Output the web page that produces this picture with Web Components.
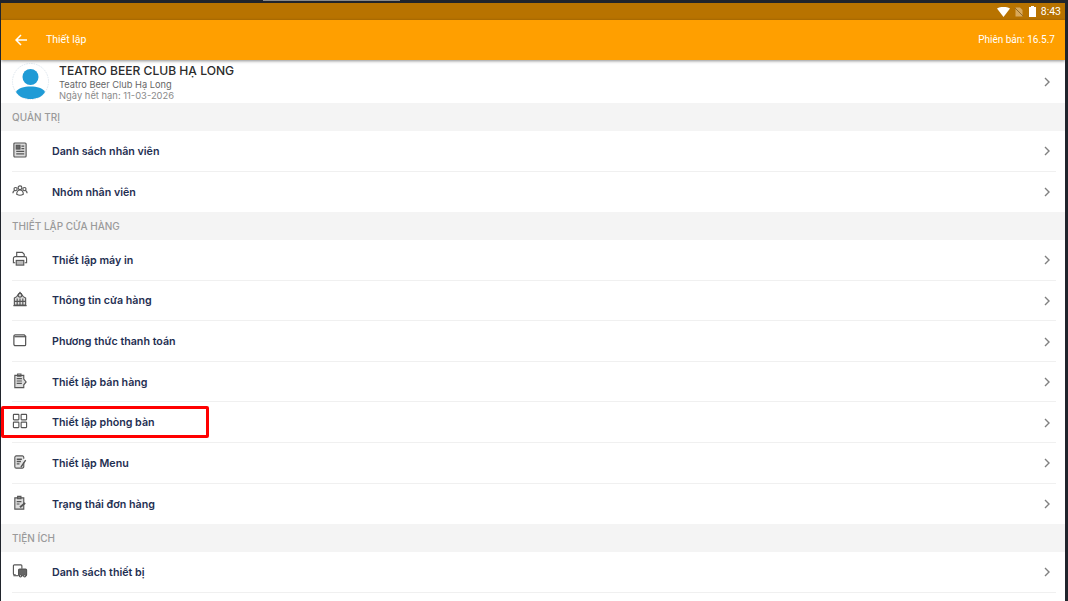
<!DOCTYPE html>
<html lang="vi">
<head>
<meta charset="utf-8">
<title>Thiết lập</title>
<style>
	html, body { margin: 0; height: 100%; background: #20242c; overflow: hidden; }
</style>
</head>
<body>
<app-frame>
	<status-bar time="8:43"></status-bar>
	<app-header title="Thiết lập" version="Phiên bản: 16.5.7"></app-header>
	<settings-list>
		<profile-row name="TEATRO BEER CLUB HẠ LONG" sub="Teatro Beer Club Hạ Long" expiry="Ngày hết hạn: 11-03-2026"></profile-row>
		<section-label>QUẢN TRỊ</section-label>
		<menu-row icon="staff">Danh sách nhân viên</menu-row>
		<menu-row icon="group" last>Nhóm nhân viên</menu-row>
		<section-label>THIẾT LẬP CỬA HÀNG</section-label>
		<menu-row icon="printer">Thiết lập máy in</menu-row>
		<menu-row icon="store">Thông tin cửa hàng</menu-row>
		<menu-row icon="wallet">Phương thức thanh toán</menu-row>
		<menu-row icon="sale">Thiết lập bán hàng</menu-row>
		<menu-row icon="grid" marked>Thiết lập phòng bàn</menu-row>
		<menu-row icon="menu">Thiết lập Menu</menu-row>
		<menu-row icon="status" last>Trạng thái đơn hàng</menu-row>
		<section-label>TIỆN ÍCH</section-label>
		<menu-row icon="device">Danh sách thiết bị</menu-row>
	</settings-list>
</app-frame>

<script>
const ICONS = {
	staff: '<rect x="2" y="1" width="13" height="15" rx="1" fill="#dcdcdc"/><rect x="4.500" y="3.500" width="4" height="4" fill="#666"/><path d="M10 4.500h3M10 7h3M4.500 10h8.500M4.500 12.500h8.500" stroke-width="1.300"/>',
	group: '<circle cx="8.500" cy="5" r="2"/><circle cx="3.800" cy="6.500" r="1.700"/><circle cx="13.200" cy="6.500" r="1.700"/><path d="M1 11c0-2 1-3 2.500-3M16 11c0-2-1-3-2.500-3M5 12c0-3 1.500-4.500 3.500-4.500S12 9 12 12c-2 1.200-5 1.200-7 0z"/>',
	printer: '<path d="M5 6V1.500h6l2 2V6M3.500 12.500H1.500V8a2 2 0 0 1 2-2h10a2 2 0 0 1 2 2v4.500h-2"/><rect x="4.500" y="10" width="8" height="5" fill="#bbb"/>',
	store: '<path d="M2.500 15V7.500L5 6l3.500-4.500L12 6l2.500 1.500V15z" fill="#ddd"/><circle cx="8.500" cy="4.500" r="2"/><path d="M1.500 15.500h14M5.500 8v7M8.500 8v7M11.500 8v7M2.500 11h12"/>',
	wallet: '<path d="M2 4.500A1.500 1.500 0 0 1 3.500 3H13l1.500 1.500v9a1 1 0 0 1-1 1h-10a1.500 1.500 0 0 1-1.500-1.500z" stroke-width="1.300"/><path d="M2.500 5h12.500" stroke-width="1.300"/>',
	sale: '<path d="M3 2.500h9.500v4l2.500 3-2.500 3v3H3z" fill="#ddd"/><path d="M6 1h3.500v2.500H6zM5 6h5.500M5 8.500h5.500M5 11h5.500"/>',
	grid: '<rect x="1.500" y="1.500" width="5.800" height="5.800" rx=".6"/><rect x="9.700" y="1.500" width="5.800" height="5.800" rx=".6"/><rect x="1.500" y="9.700" width="5.800" height="5.800" rx=".6"/><rect x="9.700" y="9.700" width="5.800" height="5.800" rx=".6"/>',
	menu: '<path d="M12.500 9v4.500a1.500 1.500 0 0 1-1.500 1.500H4.500A1.500 1.500 0 0 1 3 13.500v-10A1.500 1.500 0 0 1 4.500 2H11a1.500 1.500 0 0 1 1.500 1.500V5" fill="#e4e4e4"/><path d="M5 5.500h5.500M5 8h4.500M5 10.500h3M9.500 14l5-7.500" stroke-width="1.500"/>',
	status: '<path d="M3 3h9.500v12H3z" fill="#ddd"/><path d="M6 1.500h3.500v2.500H6z" fill="#888"/><path d="M5 7h5M5 9.500h3"/><path d="M8.500 13l5.500-4.500" stroke-width="2"/>',
	device: '<path d="M4 12.500H2.500A1 1 0 0 1 1.500 11.500V3A1 1 0 0 1 2.500 2h7a1 1 0 0 1 1 1v3"/><rect x="7" y="6.500" width="8.500" height="7" rx="1" fill="#666"/><path d="M1.500 13.500h5"/><circle cx="9" cy="13.500" r="1.200" fill="#fff"/><circle cx="13.500" cy="13.500" r="1.200" fill="#fff"/>'
};

class AppFrame extends HTMLElement {
	constructor() {
		super();
		this.attachShadow({ mode: 'open' });
		this.shadowRoot.innerHTML = `
		<style>
			:host {
				display: flex;
				flex-direction: column;
				height: 601px;
				padding: 0 3px 0 1px;
				box-sizing: border-box;
			}
			.top {
				flex: none;
				height: 3px;
				padding-left: 262px;
			}
			.speaker {
				width: 137px;
				height: 1px;
				background: #8a8a8a;
			}
			.screen {
				flex: 1;
				min-height: 0;
				display: flex;
				flex-direction: column;
				background: #fff;
				overflow: hidden;
			}
		</style>
		<div class="top"><div class="speaker"></div></div>
		<div class="screen"><slot></slot></div>`;
	}
}

class StatusBar extends HTMLElement {
	constructor() {
		super();
		this.attachShadow({ mode: 'open' });
	}

	connectedCallback() {
		this.shadowRoot.innerHTML = `
		<style>
			:host {
				display: flex;
				align-items: center;
				justify-content: flex-end;
				flex: none;
				height: 17px;
				padding-right: 4px;
				background: #b87300;
				color: #fff;
				font: 400 10.500px Roboto, sans-serif;
			}
			svg { display: block; }
			.wifi { margin-right: 5px; }
			.sim { margin-right: 6px; }
			.battery { margin-right: 5px; }
		</style>
		<svg class="wifi" width="13" height="10" viewBox="0 0 13 10"><path d="M0 1.500C3.500-.7 9.500-.7 13 1.500L6.500 10z" fill="#fff"/></svg>
		<svg class="sim" width="8" height="10" viewBox="0 0 8 10"><path d="M.500 9.500V.500h4.500l2.500 2.500v6.500z" fill="#d9a95c"/><path d="M0 1l8 8" stroke="#8f6a2c"/></svg>
		<svg class="battery" width="7" height="11" viewBox="0 0 7 11"><path d="M2 0h3v1h2v10H0V1h2z" fill="#fff"/></svg>
		<span>${this.getAttribute('time')}</span>`;
	}
}

class AppHeader extends HTMLElement {
	constructor() {
		super();
		this.attachShadow({ mode: 'open' });
	}

	connectedCallback() {
		this.shadowRoot.innerHTML = `
		<style>
			:host {
				display: flex;
				align-items: center;
				flex: none;
				height: 40px;
				padding: 0 10px 1px 14px;
				box-sizing: border-box;
				background: #ff9f00;
				color: #fff;
				font: 400 10px Roboto, sans-serif;
				box-shadow: 0 1px 3px rgba(0, 0, 0, .45);
				position: relative;
				z-index: 1;
			}
			svg { display: block; margin-right: 19px; }
			.title { flex: 1; font-size: 10.500px; }
		</style>
		<svg width="12" height="12" viewBox="0 0 12 12" fill="none" stroke="#fff" stroke-width="1.500"><path d="M12 6H1M6 1L1 6l5 5"/></svg>
		<span class="title">${this.getAttribute('title')}</span>
		<span>${this.getAttribute('version')}</span>`;
	}
}

class SettingsList extends HTMLElement {
	constructor() {
		super();
		this.attachShadow({ mode: 'open' });
		this.shadowRoot.innerHTML = `
		<style>
			:host { display: block; flex: 1; min-height: 0; }
		</style>
		<slot></slot>`;
	}
}

class ProfileRow extends HTMLElement {
	constructor() {
		super();
		this.attachShadow({ mode: 'open' });
	}

	connectedCallback() {
		this.shadowRoot.innerHTML = `
		<style>
			:host {
				display: flex;
				align-items: center;
				height: 43px;
				padding: 0 15px 0 11px;
				font-family: Inter, sans-serif;
				background: #fff;
			}
			.avatar { flex: none; margin-right: 10px; }
			.text { flex: 1; display: flex; flex-direction: column; padding-bottom: 1px; }
			.name { font-size: 12.100px; font-weight: 500; line-height: 15px; color: #2c2c2c; margin-top: 1px; }
			.sub { font-size: 9.250px; line-height: 12px; color: #666; margin-top: 1px; }
			.expiry { font-size: 9.400px; line-height: 10px; color: #8a8a8a; }
		</style>
		<svg class="avatar" width="37" height="37" viewBox="0 0 37 37">
			<circle cx="18.500" cy="18.500" r="18" fill="#fff" stroke="#dfe7ee" stroke-dasharray="1.500 1"/>
			<circle cx="18.500" cy="14" r="8" fill="#1f9bd6"/>
			<path d="M4 29c2-4 8-5.500 14.500-5.500S31 25 33 29c-3 5-8.500 7-14.500 7S7 34 4 29z" fill="#1f9bd6"/>
		</svg>
		<div class="text">
			<span class="name">${this.getAttribute('name')}</span>
			<span class="sub">${this.getAttribute('sub')}</span>
			<span class="expiry">${this.getAttribute('expiry')}</span>
		</div>
		${chevron()}`;
	}
}

class SectionLabel extends HTMLElement {
	constructor() {
		super();
		this.attachShadow({ mode: 'open' });
		this.shadowRoot.innerHTML = `
		<style>
			:host {
				display: flex;
				align-items: center;
				height: 28px;
				padding-left: 11px;
				background: #f4f4f4;
				color: #9a9a9a;
				font: 500 10px Inter, sans-serif;
			}
		</style>
		<slot></slot>`;
	}
}

class MenuRow extends HTMLElement {
	constructor() {
		super();
		this.attachShadow({ mode: 'open' });
	}

	connectedCallback() {
		const icon = ICONS[this.getAttribute('icon')];
		const mark = this.hasAttribute('marked') ? '<div class="mark"></div>' : '';
		this.shadowRoot.innerHTML = `
		<style>
			:host {
				display: block;
				position: relative;
				height: 40.570px;
				padding: 0 9px 0 11px;
				box-sizing: border-box;
				background: #fff;
				font: 600 10.700px Inter, sans-serif;
				color: #1f2f52;
			}
			.line {
				display: flex;
				align-items: center;
				height: 100%;
				padding-right: 6px;
				padding-top: 1px;
				box-sizing: border-box;
				border-bottom: 1px solid #f0f0f0;
			}
			:host([last]) .line { border-bottom: none; }
			.icon {
				flex: none;
				width: 16px;
				height: 16px;
				margin: -3px 24px 0 0;
				fill: none;
				stroke: #555;
				stroke-width: 1.200;
				filter: blur(.3px);
			}
			.label { flex: 1; }
			.mark {
				position: absolute;
				left: 0;
				top: 3.500px;
				width: 208px;
				height: 32px;
				box-sizing: border-box;
				border: 3px solid #f00;
				border-radius: 2px;
			}
		</style>
		<div class="line">
			<svg class="icon" viewBox="0 0 17 17">${icon}</svg>
			<span class="label"><slot></slot></span>
			${chevron()}
		</div>
		${mark}`;
	}
}

function chevron() {
	return '<svg width="6" height="10" viewBox="0 0 6 10" fill="none" stroke="#808080" stroke-width="1.400"><path d="M1 1l4 4-4 4"/></svg>';
}

customElements.define('app-frame', AppFrame);
customElements.define('status-bar', StatusBar);
customElements.define('app-header', AppHeader);
customElements.define('settings-list', SettingsList);
customElements.define('profile-row', ProfileRow);
customElements.define('section-label', SectionLabel);
customElements.define('menu-row', MenuRow);
</script>
</body>
</html>
